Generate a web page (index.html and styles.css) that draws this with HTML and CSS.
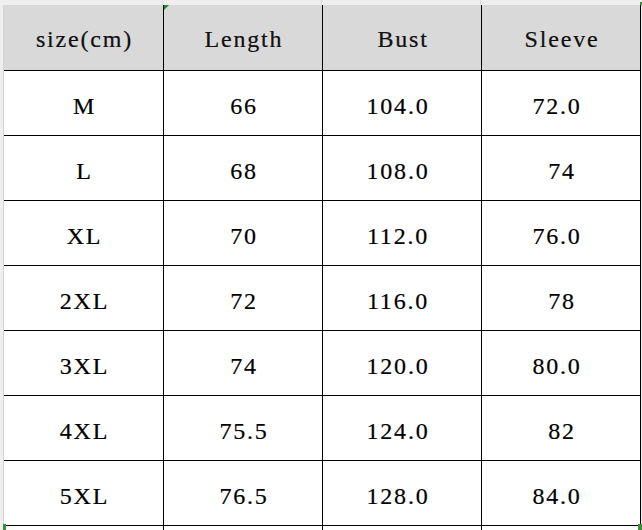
FILE: index.html
```html
<!DOCTYPE html>
<html>
<head>
<meta charset="utf-8">
<link rel="stylesheet" href="styles.css">
</head>
<body>
<div class="sheet">
  <div class="colheads">
    <div class="corner"></div>
    <div class="ch"></div>
    <div class="ch"></div>
    <div class="ch"></div>
    <div class="ch last"></div>
  </div>
  <div class="body">
    <div class="rowheads"></div>
    <div class="grid">
      <div class="cell head">size(cm)</div>
      <div class="cell head">Length</div>
      <div class="cell head">Bust</div>
      <div class="cell head">Sleeve</div>

      <div class="cell">M</div>
      <div class="cell">66</div>
      <div class="cell dec">104.0</div>
      <div class="cell dec">72.0</div>

      <div class="cell">L</div>
      <div class="cell">68</div>
      <div class="cell dec">108.0</div>
      <div class="cell">74</div>

      <div class="cell">XL</div>
      <div class="cell">70</div>
      <div class="cell dec">112.0</div>
      <div class="cell dec">76.0</div>

      <div class="cell">2XL</div>
      <div class="cell">72</div>
      <div class="cell dec">116.0</div>
      <div class="cell">78</div>

      <div class="cell">3XL</div>
      <div class="cell">74</div>
      <div class="cell dec">120.0</div>
      <div class="cell dec">80.0</div>

      <div class="cell">4XL</div>
      <div class="cell">75.5</div>
      <div class="cell dec">124.0</div>
      <div class="cell">82</div>

      <div class="cell">5XL</div>
      <div class="cell">76.5</div>
      <div class="cell dec">128.0</div>
      <div class="cell dec">84.0</div>

      <div class="cell stub"></div>
      <div class="cell stub"></div>
      <div class="cell stub"></div>
      <div class="cell stub"></div>
    </div>
  </div>
</div>
<div class="mark tri"></div>
<div class="mark tr"></div>
<div class="mark bl"></div>
<div class="mark br"></div>
</body>
</html>
```

FILE: styles.css
```css
html, body {
  margin: 0;
  padding: 0;
}
body {
  width: 642px;
  height: 530px;
  overflow: hidden;
  position: relative;
  background: #efefef;
  font-family: "Liberation Serif", "Times New Roman", serif;
}
.sheet {
  display: flex;
  flex-direction: column;
}
.colheads {
  display: flex;
  height: 5px;
  background: #efefef;
}
.corner {
  width: 4px;
}
.ch {
  width: 158px;
  border-right: 1px solid #dcdcdc;
}
.ch:first-of-type {
  width: 159px;
}
.ch.last {
  border-right: none;
}
.body {
  display: flex;
}
.rowheads {
  width: 3px;
  border-right: 1px solid #d4d4d4;
  background: #efefef;
}
.grid {
  display: grid;
  grid-template-columns: 160px 159px 159px 159px;
  grid-template-rows: 66px repeat(7, 65px) 4px;
  background: #fff;
}
.cell {
  box-sizing: border-box;
  border-right: 1px solid #000;
  border-bottom: 1px solid #000;
  display: flex;
  align-items: center;
  justify-content: center;
  font-size: 24px;
  letter-spacing: 1.8px;
  padding-left: 2px;
  color: #000;
  -webkit-text-stroke: 0.2px #000;
  padding-top: 6px;
}
.cell.head {
  background: #d9d9d9;
  padding-top: 4px;
  color: #111;
}
.cell.dec {
  padding-right: 10px;
}
.cell.stub {
  border-bottom: none;
  padding: 0;
}
.mark {
  position: absolute;
  background: #3f8f3a;
}
.tri {
  left: 164px;
  top: 5px;
  width: 0;
  height: 0;
  background: none;
  border-top: 5px solid #1f8a2e;
  border-right: 5px solid transparent;
}
.tr {
  left: 640px;
  top: 2px;
  width: 2px;
  height: 3px;
}
.bl {
  left: 3px;
  top: 524px;
  width: 3px;
  height: 6px;
}
.br {
  left: 638px;
  top: 524px;
  width: 4px;
  height: 6px;
}
```
